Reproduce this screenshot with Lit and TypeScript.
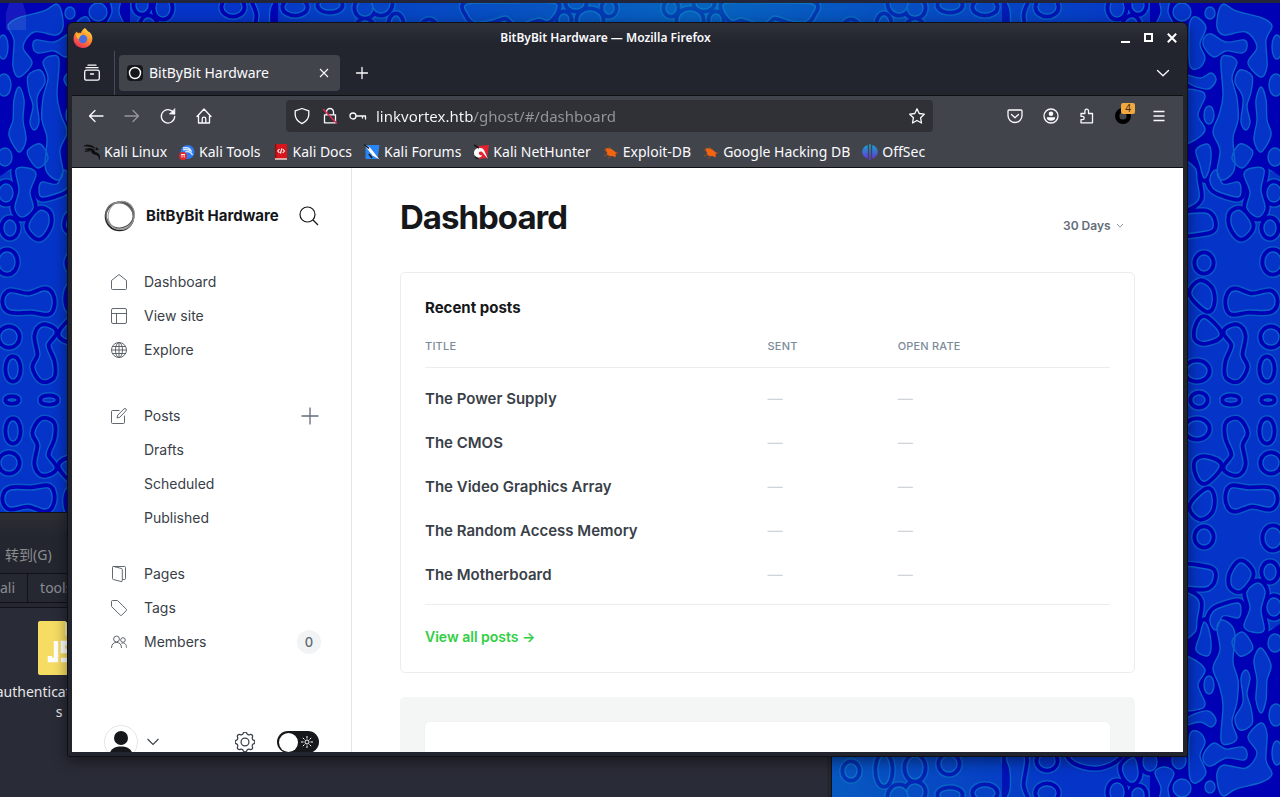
import { LitElement, html, svg, css, SVGTemplateResult } from "lit";
import { customElement, property, state } from "lit/decorators.js";

/* ---------- wallpaper ---------- */

type Pt = [number, number];

/** Closed smooth curve through the given points. */
function smooth(pts: Pt[]): string {
  const n = pts.length;
  let d = `M${pts[0][0]} ${pts[0][1]}`;
  for (let i = 0; i < n; i++) {
    const p0 = pts[(i + n - 1) % n];
    const p1 = pts[i];
    const p2 = pts[(i + 1) % n];
    const p3 = pts[(i + 2) % n];
    const c = [
      p1[0] + (p2[0] - p0[0]) / 6,
      p1[1] + (p2[1] - p0[1]) / 6,
      p2[0] - (p3[0] - p1[0]) / 6,
      p2[1] - (p3[1] - p1[1]) / 6,
    ].map((v) => v.toFixed(1));
    d += `C${c[0]} ${c[1]} ${c[2]} ${c[3]} ${p2[0]} ${p2[1]}`;
  }
  return d + "Z";
}

function oval(x: number, y: number, rx: number, ry: number): string {
  return `M${x - rx} ${y}a${rx} ${ry} 0 1 0 ${2 * rx} 0a${rx} ${ry} 0 1 0 ${-2 * rx} 0Z`;
}

/* The pattern is symmetric both ways, so only its upper right quarter is listed. */
const cells: string[] = [
  smooth([[1219, 10], [1224, 4], [1236, 11], [1262, 18], [1272, 26], [1266, 40], [1267, 66], [1261, 77], [1248, 63], [1257, 47], [1246, 32], [1224, 35], [1217, 27]]),
  smooth([[1190, 22], [1196, 17], [1206, 27], [1200, 44], [1205, 58], [1199, 68], [1190, 66], [1189, 40]]),
  smooth([[1204, 38], [1211, 34], [1226, 42], [1244, 40], [1247, 47], [1242, 53], [1226, 51], [1214, 57], [1204, 47]]),
  smooth([[1182, 74], [1200, 78], [1211, 73], [1216, 80], [1208, 89], [1190, 84]]),
  smooth([[1221, 60], [1229, 56], [1237, 62], [1232, 78], [1237, 98], [1238, 120], [1233, 138], [1235, 165], [1231, 175], [1222, 180], [1217, 172], [1220, 150], [1213, 132], [1219, 115], [1223, 95]]),
  smooth([[1240, 70], [1252, 76], [1251, 92], [1247, 106], [1250, 122], [1246, 130], [1241, 122], [1243, 98], [1235, 82]]),
  smooth([[1261, 87], [1266, 100], [1267, 120], [1271, 135], [1261, 152], [1254, 140], [1257, 120], [1256, 100]]),
  smooth([[1182, 94], [1200, 91], [1205, 97], [1198, 115], [1205, 130], [1193, 141], [1182, 140]]),
  smooth([[1240, 144], [1252, 150], [1251, 158], [1242, 168], [1232, 158]]),
  smooth([[1196, 150], [1207, 144], [1211, 152], [1209, 170], [1204, 178], [1200, 165]]),
  smooth([[1244, 174], [1252, 168], [1264, 170], [1261, 190], [1265, 208], [1258, 217], [1247, 208], [1250, 192]]),
  smooth([[1216, 170], [1223, 184], [1238, 182], [1241, 190], [1238, 197], [1222, 193], [1213, 188], [1210, 178]]),
  smooth([[1182, 163], [1195, 168], [1197, 180], [1199, 198], [1190, 206], [1182, 205]]),
  smooth([[1232, 214], [1241, 211], [1251, 226], [1241, 237], [1232, 226]]),
  smooth([[1180, 217], [1203, 213], [1211, 217], [1213, 227], [1206, 231], [1180, 233]]),
  smooth([[1200, 283], [1210, 289], [1212, 302], [1207, 309], [1192, 294]]),
  smooth([[1230, 294], [1236, 291], [1252, 296], [1270, 293], [1275, 302], [1269, 310], [1248, 310], [1232, 312], [1228, 304]]),
  smooth([[1205, 319], [1219, 334], [1206, 341], [1197, 338], [1198, 326]]),
  smooth([[1226, 332], [1237, 327], [1243, 336], [1240, 355], [1245, 367], [1238, 379], [1228, 376], [1228, 362], [1234, 345]]),
  smooth([[1007, 43], [1010, 30], [1010, 10], [1006, -4], [1026, -4], [1021, 15], [1024, 43]]),
  smooth([[1072, 50], [1075, 39], [1096, 34], [1114, 40], [1118, 50]]),
  smooth([[1123, 34], [1126, 22], [1133, 18], [1138, 26], [1134, 42]]),
  smooth([[1155, 28], [1165, 33], [1174, 27], [1168, 12], [1170, -4], [1159, -4], [1161, 12]]),
  smooth([[724, 10], [728, 3], [770, 3], [812, 4], [812, 14], [804, 22], [788, 20], [774, 16], [762, 24], [742, 18], [732, 20]]),
  oval(1210, 13, 5, 6), oval(1277, 47, 5, 12), oval(1276, 85, 7, 11), oval(1209, 115, 5, 9),
  oval(1275, 157, 7, 9), oval(1270, 228, 6, 8), oval(1273, 262, 8, 10), oval(1274, 193, 7, 9),
  oval(1204, 263, 7, 8), oval(1271, 337, 8, 8), oval(1267, 369, 5, 10), oval(1197, 371, 10, 8),
  oval(1199, 400, 6, 5), oval(1231, 400, 6, 2), oval(1268, 400, 4, 1), oval(851, 29, 6, 7),
  oval(884, 30, 6, 14), oval(915, 32, 8, 11), oval(949, 36, 8, 8), oval(1047, 39, 8, 7),
  oval(1047, 7, 9, 7), oval(1117, 8, 7, 9), oval(1138, 5, 6, 7), oval(1150, 38, 7, 9),
  oval(1179, 40, 7, 9), oval(1182, 12, 9, 9), oval(985, 7, 10, 6), oval(950, 5, 10, 5),
  oval(915, 8, 8, 8), oval(671, 8, 5, 6), oval(690, 20, 11, 9), oval(704, 3, 8, 6),
  oval(716, 20, 5, 6), oval(899, 3, 9, 10),
];

/* Where cells crowd together the gaps between them are filled. */
const dense = "M1150 0H1280V176L1262 164L1244 178L1226 186L1206 184L1190 160H1150ZM1002 0h6v40h-6z";

const quarter: SVGTemplateResult[] = [
  svg`<path class="halo" d=${cells.join("")} />`,
  svg`<path class="tube" d=${cells.join("")} />`,
  svg`<path class="dense" d=${dense} />`,
  svg`<path class="cell" d=${cells.join("")} />`,
];

@customElement("desktop-wallpaper")
export class DesktopWallpaper extends LitElement {
  static styles = css`
    :host { display: block; width: 100%; height: 100%; }
    svg { display: block; width: 100%; height: 100%; }
    .halo { fill: none; stroke: #0958c6; stroke-width: 12; stroke-linejoin: round; }
    .tube { fill: #0000b4; stroke: #0000b4; stroke-width: 9; stroke-linejoin: round; }
    .dense { fill: #0000b4; }
    .cell { fill: #0534c8; stroke: #0b62cb; stroke-width: 1.4; }
    .tint { fill: url(#tint); }
  `;
  render() {
    return html`<svg viewBox="0 0 1280 800" preserveAspectRatio="xMidYMin slice" aria-hidden="true">
      <defs>
        <radialGradient id="tint" cx=".5" cy=".5" r=".5">
          <stop offset="0" stop-color="#0a9ab4" stop-opacity=".5" />
          <stop offset=".9" stop-color="#0a80b4" stop-opacity=".12" />
          <stop offset="1" stop-color="#0a80b4" stop-opacity="0" />
        </radialGradient>
      </defs>
      <rect width="1280" height="800" fill="#0534c8" />
      <g>${quarter}</g>
      <g transform="matrix(-1 0 0 1 1280 0)">${quarter}</g>
      <g transform="matrix(1 0 0 -1 0 800)">${quarter}</g>
      <g transform="matrix(-1 0 0 -1 1280 800)">${quarter}</g>
      <ellipse class="tint" cx="700" cy="0" rx="440" ry="120" />
      <ellipse class="tint" cx="760" cy="800" rx="300" ry="120" />
    </svg>`;
  }
}

/* ---------- file manager ---------- */

@customElement("file-manager")
export class FileManager extends LitElement {
  static styles = css`
    :host {
      display: flex; flex-direction: column; box-sizing: border-box; overflow: hidden;
      border: 1px solid #101218; border-width: 1px 1px 0 0; border-radius: 0 6px 0 0;
      background: #292b36; color: #8b8c91;
      font: 14px/20px "Noto Sans", "Noto Sans CJK SC", sans-serif;
    }
    .bar { height: 32px; background: linear-gradient(#2d2e34, #23262e 24px); }
    .menu { height: 28px; padding-left: 5px; background: #23262e; border-bottom: 1px solid #101218; }
    .menu button, .path button { all: unset; white-space: nowrap; }
    .path { display: flex; height: 28px; background: #252831; border-bottom: 1px solid #101218; }
    .path button { padding: 0 12px; line-height: 28px; }
    .path .first { padding-left: 0; border-right: 1px solid #101218; }
    .rule { height: 4px; border-bottom: 1px solid #101218; background: #252831; }
    .files { flex: 1; padding: 13px 0 0 0; border-right: 4px solid #23262e; }
    .file { width: 118px; text-align: center; color: #e6e6e8; }
    .file svg { display: block; margin: 0 auto 7px; }
    .name { display: block; white-space: nowrap; margin: 0 -20px; }
  `;
  render() {
    return html`
      <div class="bar"></div>
      <div class="menu"><button>转到(G)</button></div>
      <div class="path"><button class="first">ali</button><button>tools</button></div>
      <div class="rule"></div>
      <div class="files">
        <div class="file">
          <svg width="42" height="54" viewBox="0 0 42 54" aria-hidden="true">
            <path d="M2 0h25l15 15v37a2 2 0 0 1-2 2H2a2 2 0 0 1-2-2V2a2 2 0 0 1 2-2z" fill="#f6dc63" />
            <path d="M27 0l15 15H29a2 2 0 0 1-2-2z" fill="#fbf0b4" />
            <path d="M18 20v19h-6v-4M34 22h-9v8h7v9h-9" fill="none" stroke="#fff" stroke-width="4.500" />
          </svg>
          <span class="name">authentication.tes.j</span>
          <span class="name">s</span>
        </div>
      </div>`;
  }
}

/* ---------- ghost admin page ---------- */

const navIcon = (body: SVGTemplateResult) => html`<svg class="ico" width="16" height="16" viewBox="0 0 16 16" aria-hidden="true">${body}</svg>`;

const icons = {
  home: svg`<path d="M.5 6.500L8 .5l7.500 6v8a1 1 0 0 1-1 1h-13a1 1 0 0 1-1-1z" />`,
  site: svg`<rect x=".5" y=".5" width="15" height="15" rx="1.500" /><path d="M.5 5.500h15M5.500 5.500v10" />`,
  globe: svg`<circle cx="8" cy="8" r="7.500" /><ellipse cx="8" cy="8" rx="3.500" ry="7.500" /><path d="M8 .5v15M1.500 4.500h13M.5 8h15M1.500 11.500h13" />`,
  posts: svg`<path d="M8.500 2.500h-7a1 1 0 0 0-1 1v11a1 1 0 0 0 1 1h11a1 1 0 0 0 1-1v-7M6 10l.8-3L13 .9a1.200 1.200 0 0 1 1.900 1.900L8.900 9.200z" />`,
  pages: svg`<path d="M2.500.5h11a1 1 0 0 1 1 1v11a1 1 0 0 1-1 1h-2M1.500 1.500a1 1 0 0 1 1.300-1l7.700 2a1 1 0 0 1 .8 1v11a1 1 0 0 1-1.300 1l-7.700-2a1 1 0 0 1-.8-1z" />`,
  tags: svg`<path d="M.5 1.500v4.600a1 1 0 0 0 .3.700l8.500 8.400a1 1 0 0 0 1.400 0l4.600-4.600a1 1 0 0 0 0-1.400L6.800.8a1 1 0 0 0-.7-.3H1.500a1 1 0 0 0-1 1z" />`,
  members: svg`<circle cx="5.500" cy="5" r="2.900" /><path d="M.5 14c0-3.600 2-5.600 5-5.600s5 2 5 5.600" /><circle cx="12" cy="6" r="2.300" /><path d="M10.500 9.400c2.800-1.400 5 .8 5 4.300" />`,
};

interface Item { label: string; icon?: SVGTemplateResult; add?: boolean; count?: number; }

const groups: Item[][] = [
  [{ label: "Dashboard", icon: icons.home }, { label: "View site", icon: icons.site }, { label: "Explore", icon: icons.globe }],
  [{ label: "Posts", icon: icons.posts, add: true }, { label: "Drafts" }, { label: "Scheduled" }, { label: "Published" }],
  [{ label: "Pages", icon: icons.pages }, { label: "Tags", icon: icons.tags }, { label: "Members", icon: icons.members, count: 0 }],
];

const posts = ["The Power Supply", "The CMOS", "The Video Graphics Array", "The Random Access Memory", "The Motherboard"];

@customElement("ghost-admin")
export class GhostAdmin extends LitElement {
  @property({ type: String }) site = "BitByBit Hardware";
  @state() private night = false;

  static styles = css`
    :host {
      display: flex; overflow: hidden; background: #fff; color: #394047;
      font: 14px/20px Inter, sans-serif;
    }
    button { all: unset; box-sizing: border-box; display: flex; align-items: center; }
    a { color: inherit; text-decoration: none; }
    svg { display: block; flex: none; }
    .side { flex: none; width: 280px; box-sizing: border-box; border-right: 1px solid #e3e5e8; padding: 32px 32px 0; }
    .brand { display: flex; align-items: center; height: 32px; }
    .brand strong { flex: 1; margin-left: 10px; font-size: 15px; font-weight: 700; color: #15171a; white-space: nowrap; }
    .brand button { margin-left: 8px; }
    .nav ul { list-style: none; margin: 0; padding: 0; }
    .nav { padding-top: 33px; }
    .nav ul + ul { margin-top: 32px; }
    .nav ul + ul + ul { margin-top: 22px; }
    .nav li { display: flex; align-items: center; height: 34px; padding-left: 7px; }
    .nav li a { flex: 1; display: flex; align-items: center; gap: 17px; font-size: 14px; }
    .sub a { padding-left: 33px; }
    .ico { fill: none; stroke: #50575f; stroke-width: 0.9; margin-bottom: 1px; }
    .count { min-width: 24px; height: 24px; border-radius: 12px; background: #f1f3f4; text-align: center; font: 500 13px/24px Inter, sans-serif; margin-right: -2px; color: #5d6873; }
    .foot { display: flex; align-items: center; padding-top: 66px; height: 34px; }
    .foot .user { gap: 9px; margin-right: auto; }
    .foot .gear { margin-right: 22px; }
    .switch { display: flex; align-items: center; width: 42px; height: 22px; border-radius: 11px; background: #15171a; }
    .switch input { appearance: none; margin: 0 0 0 2px; width: 19px; height: 19px; border-radius: 50%; background: #fff; }
    .switch svg { margin-left: 3px; }
    .main { flex: 1; min-width: 0; padding: 0 48px; }
    .head { display: flex; justify-content: space-between; align-items: flex-start; height: 104px; }
    h1 { margin: 29px 0 0; font-size: 33px; line-height: 40px; font-weight: 700; letter-spacing: -1px; color: #15171a; }
    .range { display: flex; align-items: center; gap: 5px; margin: 48px 11px 0 0; color: #626d79; }
    .range select { appearance: none; border: 0; padding: 0; margin: 0; background: none; color: inherit; font: 600 12px/20px Inter, sans-serif; }
    .card { border: 1px solid #ebeef0; border-radius: 5px; padding: 24px; }
    h2 { margin: 0; font-size: 15px; line-height: 22px; font-weight: 700; color: #15171a; }
    table { width: 100%; table-layout: fixed; border-collapse: separate; border-spacing: 0; margin-top: 6px; }
    th, td { padding: 0; text-align: left; }
    th { height: 42px; border-bottom: 1px solid #ebeef0; color: #7c8b9a; font-size: 11px; font-weight: 500; letter-spacing: 0.2px; }
    .title { width: 50%; }
    .sent { width: 19%; }
    td { height: 44px; font-size: 15px; font-weight: 600; }
    tr:first-child td { padding-top: 9px; }
    tr:last-child td { padding-bottom: 7px; border-bottom: 1px solid #ebeef0; }
    td.none { color: #ced4d9; font-weight: 400; }
    .all { display: block; margin-top: 22px; padding-bottom: 1px; color: #30cf43; font-size: 14px; font-weight: 600; line-height: 20px; }
    .panel { margin-top: 24px; padding: 25px; background: #f4f6f6; border-radius: 5px; }
    .inner { height: 180px; border-radius: 5px; background: #fff; box-shadow: 0 0 2px rgba(0, 0, 0, 0.06); }
  `;

  private item(i: Item) {
    return html`<li class=${i.icon ? "top" : "sub"}>
      <a href="#/${i.label.toLowerCase()}">${i.icon ? navIcon(i.icon) : ""}<span>${i.label}</span></a>
      ${i.add
        ? html`<button aria-label="New post"><svg width="18" height="18" viewBox="0 0 18 18"><path d="M9 .5v17M.5 9h17" stroke="#626d79" stroke-width="1.300" /></svg></button>`
        : ""}
      ${i.count !== undefined ? html`<span class="count">${i.count}</span>` : ""}
    </li>`;
  }

  render() {
    return html`
      <aside class="side">
        <div class="brand">
          <svg width="32" height="32" viewBox="0 0 32 32" fill="none" aria-hidden="true">
            <circle cx="15.500" cy="16.500" r="14" stroke="#222" stroke-width="1.600" />
            <ellipse cx="16.500" cy="15" rx="14" ry="13" stroke="#555" stroke-width="1.200" transform="rotate(-25 16 16)" />
            <ellipse cx="15.700" cy="16" rx="14.500" ry="12.800" stroke="#777" stroke-width="1.200" transform="rotate(40 16 16)" />
            <ellipse cx="17" cy="15" rx="13" ry="14.300" stroke="#999" stroke-width="1" transform="rotate(20 16 16)" />
          </svg>
          <strong>${this.site}</strong>
          <button aria-label="Search"><svg width="20" height="20" viewBox="0 0 20 20" fill="none" stroke="#15171a" stroke-width="1.200"><circle cx="8.500" cy="8.500" r="7.500" /><path d="M14 14l5 5" /></svg></button>
        </div>
        <nav class="nav">${groups.map((g) => html`<ul>${g.map((i) => this.item(i))}</ul>`)}</nav>
        <div class="foot">
          <button class="user" aria-label="Your account">
            <svg width="34" height="34" viewBox="0 0 34 34"><circle cx="17" cy="17" r="16.500" fill="#fff" stroke="#e3e5e8" /><circle cx="17" cy="13" r="7" fill="#15171a" /><path d="M5.500 29c1-5 5.500-7.500 11.500-7.500S27.500 24 28.500 29a16 16 0 0 1-23 0z" fill="#15171a" /></svg>
            <svg width="12" height="8" viewBox="0 0 12 8" fill="none" stroke="#394047" stroke-width="1.100"><path d="M.5 1L6 6.500 11.500 1" /></svg>
          </button>
          <button class="gear" aria-label="Settings">
            <svg width="20" height="20" viewBox="1.100 1.100 17.800 17.800" fill="none" stroke="#394047" stroke-width="1.100"><circle cx="10" cy="10" r="3.500" /><path d="M8.300 2.400a1.800 1.800 0 0 1 3.400 0 1.900 1.900 0 0 0 2.500 1 1.800 1.800 0 0 1 2.400 2.400 1.900 1.900 0 0 0 1 2.500 1.800 1.800 0 0 1 0 3.400 1.900 1.900 0 0 0-1 2.500 1.800 1.800 0 0 1-2.400 2.400 1.900 1.900 0 0 0-2.500 1 1.800 1.800 0 0 1-3.400 0 1.900 1.900 0 0 0-2.500-1 1.800 1.800 0 0 1-2.400-2.400 1.900 1.900 0 0 0-1-2.500 1.800 1.800 0 0 1 0-3.400 1.900 1.900 0 0 0 1-2.500 1.800 1.800 0 0 1 2.400-2.400 1.900 1.900 0 0 0 2.500-1z" /></svg>
          </button>
          <label class="switch">
            <input type="checkbox" role="switch" aria-label="Night shift" .checked=${this.night} @change=${() => (this.night = !this.night)} />
            <svg width="12" height="12" viewBox="0 0 12 12" fill="none" stroke="#fff"><circle cx="6" cy="6" r="2" /><path d="M6 0v2.500M6 9.500V12M0 6h2.500M9.500 6H12M1.800 1.800l1.700 1.700M8.500 8.500l1.700 1.700M1.800 10.200l1.700-1.700M8.500 3.500l1.700-1.700" /></svg>
          </label>
        </div>
      </aside>
      <main class="main">
        <header class="head">
          <h1>Dashboard</h1>
          <label class="range">
            <select aria-label="Date range"><option>30 Days</option></select>
            <svg width="8" height="6" viewBox="0 0 8 6" fill="none" stroke="#8e959d"><path d="M1 1l3 3.200L7 1" /></svg>
          </label>
        </header>
        <section class="card">
          <h2>Recent posts</h2>
          <table>
            <thead><tr><th class="title">TITLE</th><th class="sent">SENT</th><th>OPEN RATE</th></tr></thead>
            <tbody>
              ${posts.map((p) => html`<tr><td><a href="#/posts">${p}</a></td><td class="none">—</td><td class="none">—</td></tr>`)}
            </tbody>
          </table>
          <a class="all" href="#/posts">View all posts →</a>
        </section>
        <section class="panel"><div class="inner"></div></section>
      </main>`;
  }
}

/* ---------- browser window ---------- */

const chromeIcon = (body: SVGTemplateResult) => html`<svg width="18" height="18" viewBox="0 0 18 18" fill="none" stroke="currentColor" stroke-width="1.300" stroke-linecap="round" stroke-linejoin="round" aria-hidden="true">${body}</svg>`;

const c = {
  tabs: svg`<rect x="1.700" y="6.200" width="14.600" height="10" rx="1.800" /><path d="M3 3.700h12M5 1.200h8M7.500 10h3" />`,
  plus: svg`<path d="M9 3.500v11M3.500 9h11" />`,
  down: svg`<path d="M3.500 6.500L9 11.800l5.500-5.300" />`,
  back: svg`<path d="M16 9H2.500M8 3.500L2.500 9 8 14.500" />`,
  fwd: svg`<path d="M2 9h13.500M10 3.500L15.500 9 10 14.500" />`,
  reload: svg`<path d="M15.300 7A6.700 6.700 0 1 0 15.700 9.500" /><path d="M15.800 2v5h-5z" fill="currentColor" stroke-width=".8" />`,
  house: svg`<path d="M2 9.500L9 2l7 7.500M3.500 8.500V16h11V8.500M7.200 16v-4a1.800 1.800 0 0 1 3.600 0v4" />`,
  shield: svg`<path d="M9 1.500l6.800 2.300v3.700c0 4-2.500 7-6.800 9.200-4.300-2.200-6.800-5.200-6.800-9.200V3.800z" />`,
  lock: svg`<path d="M5.500 7.500V5a3.500 3.500 0 0 1 7 0v2.500M3.500 7.800h11v8h-11z" /><path d="M2.500 2.500l13 13.500" stroke="#e22850" stroke-width="1.500" />`,
  key: svg`<circle cx="4" cy="9" r="3" /><path d="M7 9h9.500v3M13.500 9v2" />`,
  star: svg`<path d="M9 1.800l2.200 4.700 5.100.7-3.700 3.600.9 5.200L9 13.500 4.500 16l.9-5.200L1.700 7.200l5.100-.7z" />`,
  pocket: svg`<path d="M3 3h12a1 1 0 0 1 1 1v4.500a7 7 0 0 1-14 0V4a1 1 0 0 1 1-1zM5.500 7.500L9 10.800l3.500-3.300" />`,
  account: svg`<circle cx="9" cy="9" r="7" /><circle cx="9" cy="6.700" r="2.300" fill="currentColor" stroke="none" /><path d="M4.800 10.200h8.400a4.200 3.500 0 0 1-8.400 0z" fill="currentColor" stroke="none" />`,
  puzzle: svg`<path d="M3 15.800h11.500V6.500h-4V4a1.800 1.800 0 0 0-3.600 0v2.500H3v2.800h1.500a1.700 1.700 0 0 1 0 3.400H3z" />`,
  menu: svg`<path d="M3.500 4.500h11M3.500 9h11M3.500 13.500h11" stroke-linecap="butt" />`,
};

const small = (body: SVGTemplateResult) => html`<svg width="16" height="16" viewBox="0 0 16 16" aria-hidden="true">${body}</svg>`;

const bug = svg`<path d="M2.500 4.500c3.500-.8 6.500.2 8.500 2.500l3 2-1.500 1c.5 1.500.3 2.500-.5 3.500-1-1.500-2.500-1.500-4.500-1.500-2 0-3.500-1-4-2.500l1-.5c-1-.8-2-2.500-2-4.500z" fill="#f2640f" /><path d="M1 6l3 1M6 2.500l2.500 3M1 12l4-1.500M5 14.500l3-2.500M15.500 9h-3" stroke="#b9530f" stroke-width=".7" />`;

const bookmarks: [string, SVGTemplateResult][] = [
  ["Kali Linux", svg`<path d="M0 2c4-1.500 9-1 11 2.500-3-2-7-2.500-11-2.500zM1 5.500c3-1.500 7-1.200 9 .5 0 2 2 2.500 4 3.500 1.500 1 2 3.500 1.500 6-.5-2.500-1-4-3-4.700C9.500 10 7.500 9.500 7.500 6.500 5.500 5.500 3 5.500 1 5.500zM12 3.500l2.500 2-3 .3M2.500.5l3.500 2M.5 8c2-1.500 4-1.700 6-1" fill="#0b0b0c" stroke="#0b0b0c" stroke-width=".6" />`],
  ["Kali Tools", svg`<circle cx="8.500" cy="8" r="7" fill="#2b7cf2" /><path d="M4 4c4-1 7 0 8 3-2.500-1.500-5-2-8-1M6 8c3-1 6 0 7.500 3" fill="none" stroke="#e8f0ff" stroke-width="1.300" /><circle cx="4" cy="12" r="4" fill="#e5252c" /><path d="M2 10.500h4M3 10.500v3M5.200 10.500v3" stroke="#fff" stroke-width=".9" />`],
  ["Kali Docs", svg`<path d="M2 0h12v15H2z" fill="#d8151b" /><path d="M2 0h1.500v14H2z" fill="#8e0e12" /><path d="M2 14.200h12v1.600H2z" fill="#e8c7c4" /><path d="M6.500 5L4.700 7l1.800 2M9.700 5l1.800 2-1.800 2M8.700 4.500l-1.200 5" fill="none" stroke="#fff" stroke-width="1.100" />`],
  ["Kali Forums", svg`<path d="M1.500 1h14l-2 14h-12z" fill="#2986f5" /><path d="M0 .5l6 3 4 5 5.500 7-7-4-4-5z" fill="#fff" /><path d="M0 .5l5 4M5 10l3 4" stroke="#16181c" stroke-width="1.500" />`],
  ["Kali NetHunter", svg`<path d="M5 2l11-1-2 13-8 1z" fill="#e2222d" /><path d="M1 9c0-5 7-7 10-3l4 9-5-6C8 6 5 8 6 10c1 2 3 1 3 1 0 4-8 3-8-2z" fill="#fff" /><path d="M1 1l5 3M2 13l3 2" stroke="#17181b" stroke-width="1.500" />`],
  ["Exploit-DB", bug],
  ["Google Hacking DB", bug],
  ["OffSec", svg`<defs><linearGradient id="os" gradientUnits="userSpaceOnUse" x1="0" y1="0" x2="0" y2="16"><stop stop-color="#14a8cc" /><stop offset="1" stop-color="#6a2fd8" /></linearGradient></defs><path d="M5.800 1v13.600C-1.700 12.500-1.700 3.100 5.800 1zM10.200 1v13.600c7.500-2.100 7.500-11.500 0-13.600zM7.200.3h1.600v15.700H7.200z" fill="url(#os)" />`],
];

@customElement("browser-window")
export class BrowserWindow extends LitElement {
  static styles = css`
    :host {
      display: flex; flex-direction: column; box-sizing: border-box;
      border: 1px solid #0e1014; border-radius: 6px 6px 2px 2px; padding: 0 4px 4px;
      background: linear-gradient(#2e3139, #22252e 20px) #22252e;
      box-shadow: 0 4px 14px rgba(0, 0, 0, 0.45);
      color: #fbfbfe; font: 14px/20px "Noto Sans", sans-serif;
    }
    button { all: unset; box-sizing: border-box; display: flex; align-items: center; justify-content: center; width: 36px; height: 36px; flex: none; }
    svg { display: block; flex: none; }
    a { color: inherit; text-decoration: none; }
    .bar { display: grid; grid-template-columns: 1fr auto 1fr; align-items: center; box-sizing: border-box; height: 28px; padding-top: 1px; }
    .bar strong { font-size: 12px; font-weight: 600; line-height: 18px; margin-right: 44px; }
    .wins { display: flex; justify-content: flex-end; }
    .wins button { width: 23px; height: 26px; }
    .tabs { display: flex; align-items: center; height: 44px; border-bottom: 1px solid #0e1014; }
    .list { width: 40px; }
    .sep { align-self: stretch; width: 1px; margin: 0 4px 0 2px; background: #4a4c54; }
    .tab { display: flex; align-items: center; box-sizing: border-box; width: 221px; height: 36px; padding: 0 0 0 8px; border-radius: 4px; background: #42444c; margin-right: 4px; }
    .tab span { flex: 1; margin-left: 6px; white-space: nowrap; }
    .tab button { width: 32px; }
    .more { margin: 0 2px 0 auto; }
    .tools { display: flex; align-items: center; box-sizing: border-box; height: 41px; padding: 0 6px 1px; background: #42444c; }
    .dim { opacity: 0.45; }
    .url { flex: 1; display: flex; align-items: center; gap: 10px; height: 32px; margin: 0 64px; padding: 0 7px; border-radius: 4px; background: #303136; }
    .url input {
      flex: 1; min-width: 0; border: 0; padding: 0; margin-left: -1px; outline: 0; font: inherit; font-size: 15px;
      color: transparent; background: linear-gradient(90deg, #fbfbfe 98px, #96979c 98px); -webkit-background-clip: text; background-clip: text;
    }
    .ext { position: relative; }
    .badge { position: absolute; right: 6px; top: 5px; padding: 0 4px; border-radius: 2px; background: #f0a840; color: #4a2a08; font: 10px/11px "Noto Sans", sans-serif; }
    .marks { display: flex; gap: 12px; align-items: center; height: 30px; padding: 0 12px; background: #42444c; border-bottom: 1px solid #0e1014; }
    .marks a { display: flex; align-items: center; gap: 4px; white-space: nowrap; }
    ghost-admin { flex: 1; min-height: 0; }
  `;
  render() {
    return html`
      <div class="bar">
        <svg width="22" height="22" viewBox="0 0 22 22" aria-hidden="true">
          <defs>
            <linearGradient id="fx" x1=".8" y1="0" x2=".2" y2="1"><stop stop-color="#ffe04a" /><stop offset=".45" stop-color="#ff8a2a" /><stop offset="1" stop-color="#ee2560" /></linearGradient>
          </defs>
          <path d="M13 1c2 2 2.500 3 4 4l1 .5c2 2 3 5 2 8.500-1 4-4.500 7-9 7-5 0-9.500-4-9.500-9 0-3 1-5 2-6l.8-1.500L6 6c1-.5 2-.5 3 0 .5-2 2-4 4-5z" fill="url(#fx)" />
          <circle cx="11" cy="12" r="4.200" fill="#4a6ee0" />
          <path d="M3.500 6c3 1 5 1 7 .8-.5 2-2.500 2-3 3.500 0 2-1.500 2-2.500.7z" fill="#ffb52e" />
        </svg>
        <strong>BitByBit Hardware — Mozilla Firefox</strong>
        <div class="wins">
          <button aria-label="Minimize"><svg width="10" height="10"><path d="M0 9h9" stroke="#fff" stroke-width="2" /></svg></button>
          <button aria-label="Maximize"><svg width="10" height="10"><path d="M1 1h7v7H1z" fill="none" stroke="#fff" stroke-width="2" /></svg></button>
          <button aria-label="Close"><svg width="10" height="10"><path d="M.8.8l8.400 8.400M9.200.8L.8 9.200" stroke="#fff" stroke-width="2" /></svg></button>
        </div>
      </div>
      <div class="tabs">
        <button class="list" aria-label="Recent tabs">${chromeIcon(c.tabs)}</button>
        <div class="sep"></div>
        <div class="tab">
          ${small(svg`<rect width="16" height="16" rx="4" fill="#15171a" /><circle cx="8" cy="8" r="5.500" fill="none" stroke="#fff" stroke-width="1.400" />`)}
          <span>BitByBit Hardware</span>
          <button aria-label="Close tab"><svg width="10" height="10"><path d="M1 1l8 8M9 1L1 9" stroke="#fbfbfe" stroke-width="1.100" /></svg></button>
        </div>
        <button aria-label="New tab">${chromeIcon(c.plus)}</button>
        <button class="more" aria-label="All tabs">${chromeIcon(c.down)}</button>
      </div>
      <div class="tools">
        <button aria-label="Back">${chromeIcon(c.back)}</button>
        <button class="dim" aria-label="Forward">${chromeIcon(c.fwd)}</button>
        <button aria-label="Reload">${chromeIcon(c.reload)}</button>
        <button aria-label="Home">${chromeIcon(c.house)}</button>
        <div class="url">
          ${chromeIcon(c.shield)}${chromeIcon(c.lock)}${chromeIcon(c.key)}
          <input aria-label="Address" value="linkvortex.htb/ghost/#/dashboard" />
          ${chromeIcon(c.star)}
        </div>
        <button aria-label="Pocket">${chromeIcon(c.pocket)}</button>
        <button aria-label="Account">${chromeIcon(c.account)}</button>
        <button aria-label="Extensions">${chromeIcon(c.puzzle)}</button>
        <button class="ext" aria-label="Proxy"><svg width="18" height="18"><circle cx="9" cy="9" r="5.800" fill="none" stroke="#000" stroke-width="4.400" /></svg><span class="badge">4</span></button>
        <button aria-label="Menu">${chromeIcon(c.menu)}</button>
      </div>
      <nav class="marks">${bookmarks.map(([name, icon]) => html`<a href="#">${small(icon)}<span>${name}</span></a>`)}</nav>
      <ghost-admin></ghost-admin>`;
  }
}

/* ---------- desktop ---------- */

@customElement("app-root")
export class AppRoot extends LitElement {
  static styles = css`
    :host { display: block; position: relative; height: 100vh; overflow: hidden; background: #0534c8; }
    .panel { position: absolute; inset: 0 0 auto 0; height: 3px; background: #23263a; }
    .trash { position: absolute; left: 5px; top: 3px; opacity: 0.12; }
    .files { position: absolute; left: 0; top: 512px; bottom: 0; width: 65%; }
    .browser { position: absolute; left: 67px; top: 22px; right: 92px; bottom: 40px; }
  `;
  render() {
    return html`
      <desktop-wallpaper></desktop-wallpaper>
      <svg class="trash" width="22" height="27" viewBox="0 0 22 27" aria-hidden="true"><path d="M4 0h14l3 10v17H1V10z" fill="#b8c4ff" /></svg>
      <div class="panel"></div>
      <file-manager class="files"></file-manager>
      <browser-window class="browser"></browser-window>`;
  }
}
